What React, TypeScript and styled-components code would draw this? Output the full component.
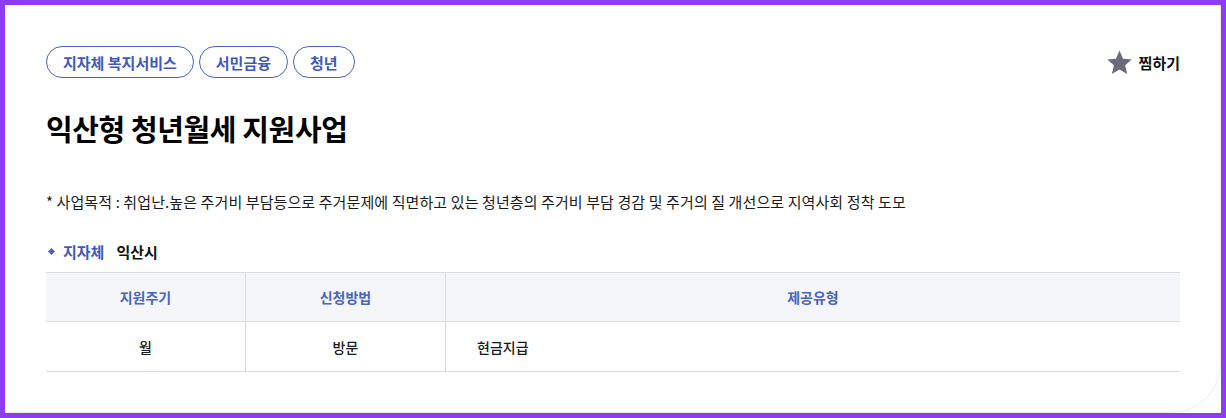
import React from 'react';
import styled, { createGlobalStyle } from 'styled-components';

const GlobalStyle = createGlobalStyle`
  html, body { margin: 0; padding: 0; background: #8e3cf2; }
  body { font-family: "Noto Sans CJK KR", "Noto Sans", sans-serif; color: #111; }
  * { box-sizing: border-box; }
`;

const Frame = styled.div`
  width: 1226px;
  height: 418px;
  padding: 5px;
  background: #8e3cf2;
`;

const Sheet = styled.div`
  width: 100%;
  height: 100%;
  background: #fff;
  overflow: hidden;
`;

const Card = styled.div`
  height: 100%;
  padding: 41px 40px 0 41px;
  border-right: 1px solid #ececec;
  border-bottom: 1px solid #ececec;
  border-bottom-right-radius: 50px;
`;

const TopRow = styled.div`
  display: flex;
  justify-content: space-between;
  align-items: center;
`;

const Tags = styled.div`
  display: flex;
  gap: 5px;
`;

const Tag = styled.span`
  display: inline-flex;
  align-items: center;
  height: 32px;
  padding: 0 16px;
  border: 1px solid #4a62c4;
  border-radius: 16px;
  color: #3f58bd;
  font-size: 15px;
  font-weight: 700;
`;

const Zzim = styled.button`
  display: flex;
  align-items: center;
  gap: 6px;
  border: 0;
  background: none;
  padding: 0;
  font-family: inherit;
  font-size: 15px;
  font-weight: 700;
  color: #111;
  cursor: pointer;
`;

const Title = styled.h1`
  margin: 32px 0 0;
  font-size: 29px;
  line-height: 36px;
  font-weight: 700;
  letter-spacing: -0.4px;
  color: #000;
`;

const Purpose = styled.p`
  margin: 45px 0 0;
  font-size: 15px;
  line-height: 22px;
  letter-spacing: 0.1px;
  color: #1a1a1a;
`;

const Region = styled.div`
  display: flex;
  align-items: center;
  margin-top: 28px;
  padding-left: 1px;
  height: 20px;
  font-size: 15px;
  font-weight: 700;
`;

const Diamond = styled.span`
  width: 5px;
  height: 5px;
  background: #4a62c4;
  transform: rotate(45deg);
  margin: 0 9px 0 2px;
`;

const RegionLabel = styled.span`
  color: #3f58bd;
  margin-right: 12px;
`;

const Table = styled.div`
  margin-top: 11px;
  border-top: 1px solid #dcdcdc;
  display: grid;
  grid-template-columns: 200px 200px 1fr;
`;

const Cell = styled.div<{ $head?: boolean; $left?: boolean; $last?: boolean }>`
  height: ${p => (p.$head ? '49px' : '50px')};
  display: flex;
  align-items: center;
  justify-content: ${p => (p.$left ? 'flex-start' : 'center')};
  padding-left: ${p => (p.$left ? '31px' : '0')};
  background: ${p => (p.$head ? '#f4f6fa' : '#fff')};
  border-bottom: 1px solid #dcdcdc;
  border-right: ${p => (p.$last ? '0' : '1px solid #dcdcdc')};
  font-size: 14px;
  font-weight: ${p => (p.$head ? 700 : 500)};
  color: ${p => (p.$head ? '#4a62c4' : '#1a1a1a')};
`;

const StarIcon = () => (
  <svg width="27" height="27" viewBox="0 0 24 24" aria-hidden="true">
    <path
      d="M12 1.4l3.1 7.3 7.8.7-5.9 5.1 1.8 7.7L12 18.2l-6.8 4 1.8-7.7-5.9-5.1 7.8-.7z"
      fill="#6a6c7e"
    />
  </svg>
);

const tags = ['지자체 복지서비스', '서민금융', '청년'];

export default function App() {
  return (
    <Frame>
      <GlobalStyle />
      <Sheet>
        <Card>
          <TopRow>
            <Tags>
              {tags.map(t => (
                <Tag key={t}>{t}</Tag>
              ))}
            </Tags>
            <Zzim>
              <StarIcon />
              찜하기
            </Zzim>
          </TopRow>
          <Title>익산형 청년월세 지원사업</Title>
          <Purpose>
            * 사업목적 : 취업난.높은 주거비 부담등으로 주거문제에 직면하고 있는 청년층의 주거비 부담 경감 및 주거의 질 개선으로 지역사회 정착 도모
          </Purpose>
          <Region>
            <Diamond />
            <RegionLabel>지자체</RegionLabel>
            <span>익산시</span>
          </Region>
          <Table>
            <Cell $head>지원주기</Cell>
            <Cell $head>신청방법</Cell>
            <Cell $head $last>제공유형</Cell>
            <Cell>월</Cell>
            <Cell>방문</Cell>
            <Cell $left $last>현금지급</Cell>
          </Table>
        </Card>
      </Sheet>
    </Frame>
  );
}
